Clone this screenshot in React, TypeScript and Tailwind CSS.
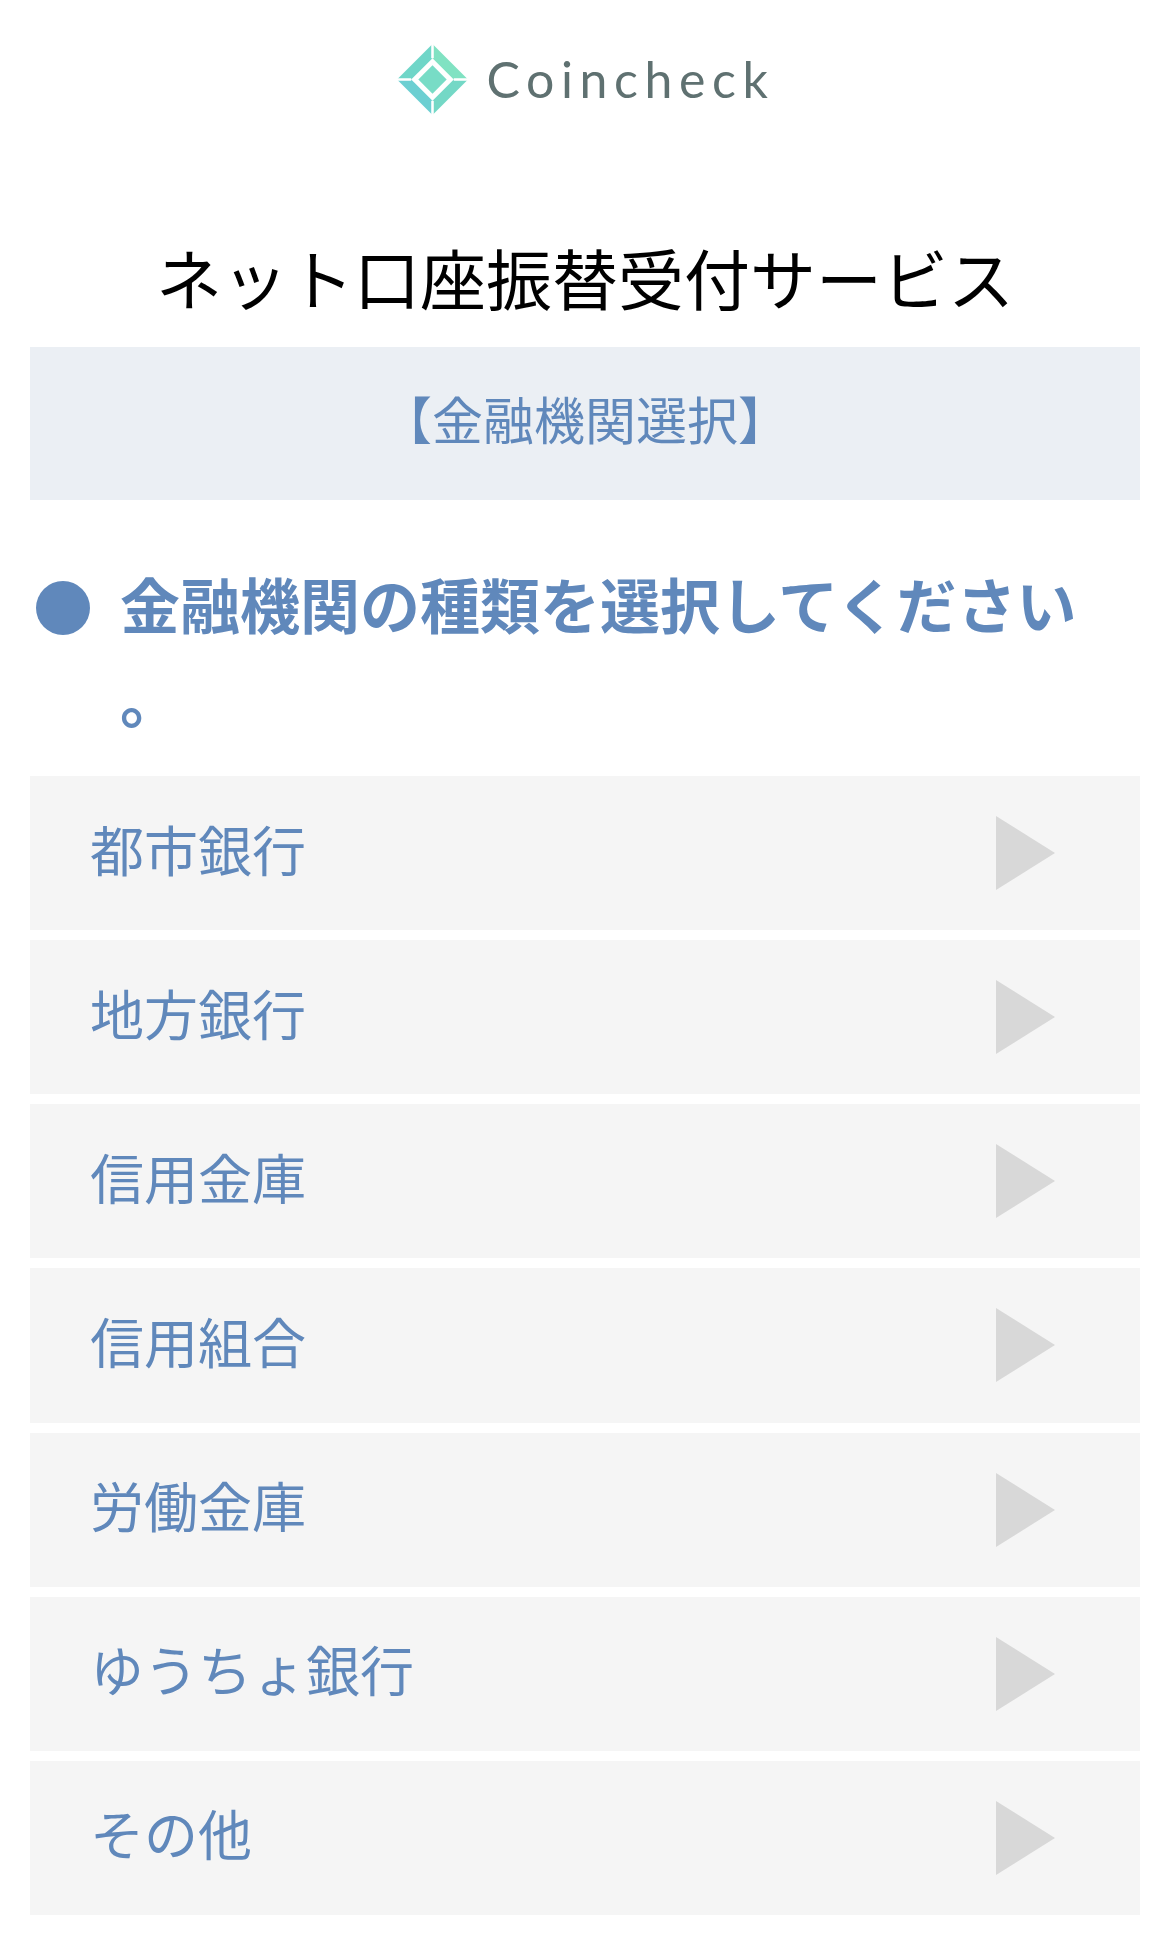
const rows = ["都市銀行","地方銀行","信用金庫","信用組合","労働金庫","ゆうちょ銀行","その他"];
export default function App() {
  return (
    <div className="w-[1170px] h-[1944px] bg-white overflow-hidden font-['Noto_Sans_CJK_JP',sans-serif]">
      <div className="h-[158px] flex items-center justify-center">
        <div className="flex items-center gap-[16px] blur-[0.7px]">
          <svg width="75" height="75" viewBox="0 0 74 74">
            <path d="M37 2 L37 16 L16 37 L2 37 Z" fill="#6fd6c8" />
            <path d="M37 2 L72 37 L58 37 L37 16 Z" fill="#80e2c2" />
            <path d="M2 37 L16 37 L37 58 L37 72 Z" fill="#6ccfd2" />
            <path d="M72 37 L58 37 L37 58 L37 72 Z" fill="#74d8c6" />
            <path d="M37 23 L51 37 L37 51 L23 37 Z" fill="#78dcc6" />
            <path d="M37 0 L37 16 M37 58 L37 74 M0 37 L16 37 M58 37 L74 37" stroke="#ffffff" strokeWidth="2.5" />
          </svg>
          <span className="text-[50px] leading-[60px] tracking-[6.6px] font-normal text-[#5f7171] font-['Lato',sans-serif]">Coincheck</span>
        </div>
      </div>
      <h1 className="text-center text-[66px] leading-[96px] font-normal text-black h-[96px] mt-[70px]">ネット口座振替受付サービス</h1>
      <div className="mx-[30px] mt-[23px] h-[153px] pb-[10px] bg-[#ebeff4] flex items-center justify-center text-[51px] text-[#6088bb]">【金融機関選択】</div>
      <div className="mx-[30px] mt-[53px] relative pl-[90px] text-[60px] font-bold text-[#6088bb] whitespace-nowrap">
        <span className="absolute left-[6px] top-[28px] w-[54px] h-[54px] rounded-full bg-[#6088bb]" />
        <div className="leading-[100px]">金融機関の種類を選択してください</div>
        <div className="leading-[87px]">。</div>
      </div>
      <div className="mx-[30px] flex flex-col gap-[10px] mt-[36px]">
        {rows.map((r) => (
          <div key={r} className="h-[154.15px] bg-[#f5f5f5] flex items-center justify-between pl-[60px] pr-[84px] text-[54px] text-[#6088bb]">
            <span className="pb-[10px]">{r}</span>
            <svg width="60" height="74" viewBox="0 0 60 74"><path d="M0 0 L59 37 L0 74 Z" fill="#d8d8d8" /></svg>
          </div>
        ))}
      </div>
    </div>
  );
}
